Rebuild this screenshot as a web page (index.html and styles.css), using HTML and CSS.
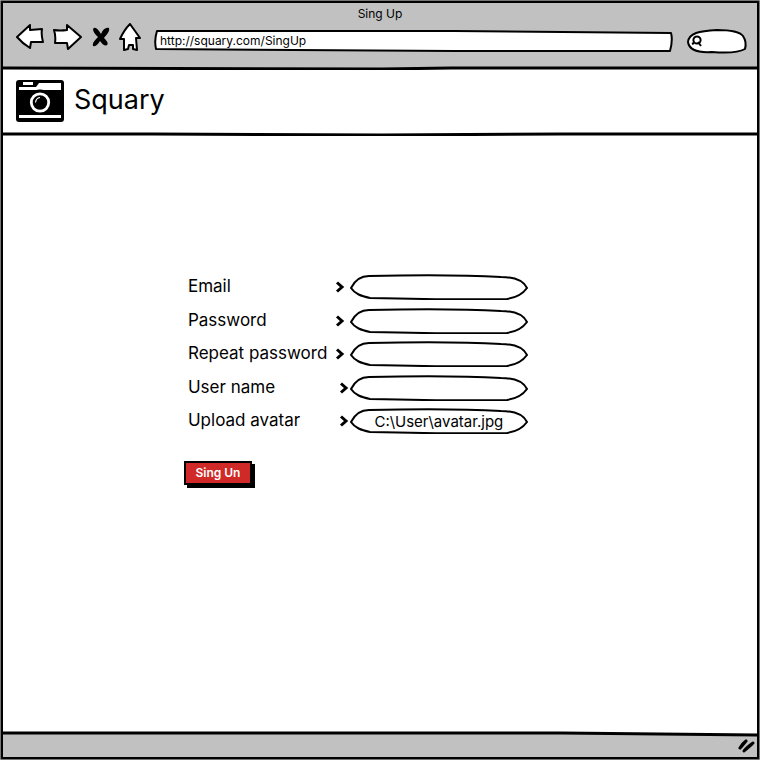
FILE: index.html
```html
<!DOCTYPE html>
<html lang="en">
<head>
<meta charset="utf-8">
<meta name="viewport" content="width=device-width, initial-scale=1">
<title>Sing Up</title>
<link rel="stylesheet" href="styles.css">
</head>
<body>
<svg class="defs" aria-hidden="true">
  <symbol id="pill" viewBox="0 0 178 26" preserveAspectRatio="none">
    <path d="M1 14C5 6 12 2 19 2C65 1 115 1 151 3C164 3 173 6 177 14C172 21 164 24 157 25C110 26 63 25 20 24C11 22 5 20 1 14Z"/>
  </symbol>
  <symbol id="chevron" viewBox="0 0 10 12"><path d="M2 1.500L7 6L2 10.500"/></symbol>
</svg>
<div class="window">
  <header class="chrome">
    <div class="title">Sing Up</div>
    <div class="toolbar">
      <nav class="nav" aria-label="Browser">
        <button type="button" aria-label="Back"><svg width="29" height="28" viewBox="0 0 29 28"><path class="shape" d="M2 14L15 2L15 7L27 6Q26 12 28 19L16 19L15 25Q7 20 2 14Z"/></svg></button>
        <button type="button" aria-label="Forward"><svg width="30" height="28" viewBox="0 0 30 28"><path class="shape" d="M2 7Q8 8 15 7L15 2L29 14L16 26L15 20L3 20Q4 13 2 7Z"/></svg></button>
        <button type="button" class="stop" aria-label="Stop"><svg width="18" height="20" viewBox="0 0 18 20"><path d="M1 2C3-1 6 2 9 7C11 2 14 0 17 1C18 5 14 8 12 11C14 13 17 16 15 18C12 20 10 16 8 14C6 17 4 20 1 19C0 16 3 13 6 10C3 7 1 5 1 2Z"/></svg></button>
        <button type="button" aria-label="Home"><svg width="24" height="28" viewBox="0 0 24 28"><path class="shape" d="M12 1L22 15L18 15L19 27L15 26L15 22L11 22L10 26L6 27L6 16L2 16Q6 7 12 1Z"/></svg></button>
      </nav>
      <div class="field address">
        <svg class="outline" viewBox="0 0 519 22" preserveAspectRatio="none" aria-hidden="true"><path d="M3 1L300 1L517 3Q519 10 516 21L300 21Q120 20 2 19Q0 10 3 1Z"/></svg>
        <input type="text" aria-label="Address" value="http://squary.com/SingUp">
      </div>
      <div class="field search">
        <svg class="outline" viewBox="0 0 60 25" preserveAspectRatio="none" aria-hidden="true"><path d="M1 13C2 4 12 2 30 1C44 1 53 3 56 7Q60 13 58 20C51 24 37 24 25 23C9 24 2 20 1 13Z"/></svg>
        <svg class="lens" width="12" height="12" viewBox="0 0 12 12" aria-hidden="true"><circle cx="6" cy="5" r="3.600"/><path d="M3 8L1 9M7 7L10 11"/></svg>
        <input type="search" aria-label="Search">
      </div>
    </div>
  </header>
  <svg class="rule" viewBox="0 0 756 4" preserveAspectRatio="none" aria-hidden="true"><path d="M0 2L380 3L450 2L756 2"/></svg>
  <div class="brand">
    <svg width="48" height="42" viewBox="0 0 48 42" aria-hidden="true">
      <rect width="48" height="42" rx="3"/>
      <path fill="#fff" d="M7 2H17V5H7ZM3 7H20L23 3H45V10H3ZM3 35H45V38H3Z"/>
      <circle cx="24" cy="22" r="12.500"/>
      <circle cx="24" cy="22.500" r="8.700" fill="#000" stroke="#fff" stroke-width="2.800"/>
      <path d="M19.500 22.500Q20 18 24 17.500" fill="none" stroke="#fff" stroke-width="1.200"/>
    </svg>
    <h1>Squary</h1>
  </div>
  <svg class="rule" viewBox="0 0 756 4" preserveAspectRatio="none" aria-hidden="true"><path d="M0 2L150 2L380 3L560 2L756 2"/></svg>
  <main>
    <form>
      <div class="rows">
        <div class="row"><label for="email">Email</label><svg class="chevron"><use href="#chevron"/></svg><div class="field pill"><svg class="outline"><use href="#pill"/></svg><input id="email" type="text"></div></div>
        <div class="row"><label for="password">Password</label><svg class="chevron"><use href="#chevron"/></svg><div class="field pill"><svg class="outline"><use href="#pill"/></svg><input id="password" type="password"></div></div>
        <div class="row"><label for="repeat">Repeat password</label><svg class="chevron"><use href="#chevron"/></svg><div class="field pill"><svg class="outline"><use href="#pill"/></svg><input id="repeat" type="password"></div></div>
        <div class="row close"><label for="name">User name</label><svg class="chevron"><use href="#chevron"/></svg><div class="field pill"><svg class="outline"><use href="#pill"/></svg><input id="name" type="text"></div></div>
        <div class="row close"><label for="avatar">Upload avatar</label><svg class="chevron"><use href="#chevron"/></svg><div class="field pill"><svg class="outline"><use href="#pill"/></svg><input id="avatar" type="text" value="C:\User\avatar.jpg"></div></div>
      </div>
      <button type="button" class="submit">Sing Un</button>
    </form>
  </main>
  <footer>
    <svg class="slope" viewBox="0 0 756 6" preserveAspectRatio="none" aria-hidden="true"><path class="above" d="M0 0H756V4L560 2L0 2Z"/><path d="M0 2L560 2L756 4"/></svg>
    <svg class="grip" width="17" height="14" viewBox="0 0 17 14" aria-hidden="true"><path d="M2 9Q4 5 8 2M6 12Q8 9 15 4M3 8L8 2M7 11L14 5"/></svg>
  </footer>
</div>
</body>
</html>
```
FILE: styles.css
```css
* { box-sizing: border-box; }

body {
  margin: 0;
  background: #fff;
  color: #000;
  font-family: Inter, "Open Sans", sans-serif;
}

button, input {
  font: inherit;
  color: inherit;
  border: 0;
  padding: 0;
  background: none;
}

input { outline: 0; min-width: 0; }

.defs { position: absolute; width: 0; height: 0; }

.window {
  min-height: 100vh;
  display: flex;
  flex-direction: column;
  border: 3px solid #000;
  border-radius: 2px;
  outline: 1px solid #777;
  outline-offset: -1px;
}

.chrome { background: #c1c1c1; height: 63px; }

.title {
  padding-top: 2px;
  font-size: 12px;
  line-height: 17px;
  text-align: center;
}

.toolbar {
  display: flex;
  align-items: center;
  padding: 0 10px 0 12px;
  height: 38px;
}

.nav {
  display: flex;
  align-items: center;
  gap: 8px;
  margin-right: 12px;
  padding-bottom: 8px;
}
.nav button { display: flex; }
.nav .stop { margin-left: 2px; }

.shape {
  fill: #fff;
  stroke: #000;
  stroke-width: 2;
  stroke-linejoin: round;
}

.field { position: relative; display: flex; align-items: center; }
.field input { position: relative; width: 100%; height: 100%; }

.outline {
  position: absolute;
  inset: 0;
  width: 100%;
  height: 100%;
  fill: #fff;
  stroke: #000;
  stroke-width: 2;
  stroke-linejoin: round;
  overflow: visible;
}

.address {
  flex: 1;
  height: 22px;
  margin-right: 14px;
  padding: 0 6px 2px;
  font-size: 12px;
}

.search { width: 60px; height: 25px; padding: 0 6px 0 4px; }

.lens {
  position: relative;
  flex: none;
  fill: none;
  stroke: #000;
  stroke-width: 2;
}

.rule {
  display: block;
  flex: none;
  width: 100%;
  height: 4px;
  fill: none;
  stroke: #000;
  stroke-width: 3;
}

.chrome + .rule { background: linear-gradient(#c1c1c1 50%, #fff 50%); }

.brand {
  display: flex;
  align-items: center;
  gap: 10px;
  height: 62px;
  padding-left: 13px;
}

h1 {
  margin: 0;
  padding-bottom: 2px;
  font-size: 27px;
  line-height: 32px;
  font-weight: 400;
}

main { flex: 1; padding: 138px 0 40px 24%; }

.rows {
  display: flex;
  flex-direction: column;
  justify-content: space-between;
  height: 160px;
  margin-left: 4px;
}

.row { display: flex; align-items: center; font-size: 17px; line-height: 24px; }
.row label { width: 147px; padding-bottom: 2px; }
.close label { width: 151px; }

.chevron {
  width: 10px;
  height: 12px;
  margin-right: 5px;
  fill: none;
  stroke: #000;
  stroke-width: 3;
}

.close .chevron { margin-right: 1px; }

.pill { width: 178px; height: 26px; padding: 0 16px; font-size: 15px; }
.pill input { text-align: center; }

.submit {
  margin-top: 27px;
  height: 24px;
  width: 68px;
  border: 2px solid #000;
  background: #cf2a27;
  color: #fff;
  font-size: 12px;
  font-weight: 600;
  line-height: 18px;
  box-shadow: 3px 3px #000;
}

footer { background: #c1c1c1; height: 26px; }

.slope {
  display: block;
  width: 100%;
  height: 6px;
  fill: none;
  stroke: #000;
  stroke-width: 3;
}

.slope .above { fill: #fff; stroke: none; }

.grip {
  display: block;
  margin: 2px 2px 0 auto;
  fill: none;
  stroke: #000;
  stroke-width: 3;
  stroke-linecap: round;
}
```
